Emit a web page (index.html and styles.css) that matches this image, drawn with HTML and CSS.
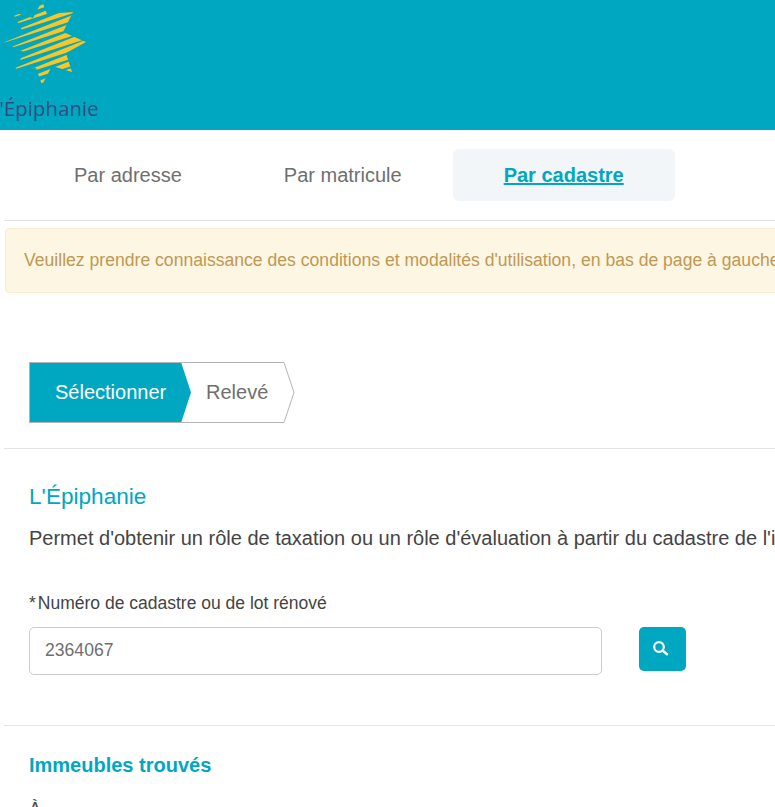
FILE: index.html
```html
<!DOCTYPE html>
<html lang="fr">
<head>
    <meta charset="UTF-8">
    <meta name="viewport" content="width=device-width, initial-scale=1.0">
    <title>L'Épiphanie - Rôle en ligne</title>
    <link rel="stylesheet" href="styles.css">
</head>
<body>
    <header class="banner">
        <svg class="logo-star" width="90" height="90" viewBox="0 0 90 90" aria-hidden="true">
            <defs>
                <clipPath id="star-shape">
                    <polygon points="42,1 47,14 73,12 63,32 86,42 66,53 72,72 52,66 42,85 36,68 15,70 24,52 3,42 22,30 12,12 33,18"/>
                </clipPath>
            </defs>
            <path clip-path="url(#star-shape)" fill="#fdc521" d="M0 14L90-21.9V-14.9ZM0 21.5L90-14.4V-7.4ZM0 29L90-6.9V.1ZM0 36.5L90 .6V7.6ZM0 44L90 8.1V15.1ZM0 51.5L90 15.6V22.6ZM0 59L90 23.1V30.1ZM0 66.5L90 30.6V37.6ZM0 74L90 38.1V45.1ZM0 81.5L90 45.6V52.6ZM0 89L90 53.1V60.1ZM0 96.5L90 60.6V67.6ZM0 104L90 68.1V75.1Z"/>
        </svg>
        <div class="logo-name">l'Épiphanie</div>
    </header>

    <div class="page">
        <nav class="tabs">
            <a class="tab">Par adresse</a>
            <a class="tab">Par matricule</a>
            <a class="tab tab-active">Par cadastre</a>
        </nav>

        <div class="alert">Veuillez prendre connaissance des conditions et modalités d'utilisation, en bas de page à gauche.</div>

        <div class="steps">
            <div class="step step-active">Sélectionner</div>
            <svg class="step-tip step-tip-active" width="10" height="61" viewBox="0 0 10 61" aria-hidden="true">
                <polygon points="0,0 10,30.5 0,61" fill="#00a7c0"/>
            </svg>
            <div class="step">Relevé</div>
            <svg class="step-tip" width="11" height="61" viewBox="0 0 11 61" aria-hidden="true">
                <polyline points="0,0.5 10,30.5 0,60.5" fill="none" stroke="#b5b5b5"/>
            </svg>
        </div>

        <section class="search">
            <h2>L'Épiphanie</h2>
            <p class="intro">Permet d'obtenir un rôle de taxation ou un rôle d'évaluation à partir du cadastre de l'immeuble.</p>
            <label class="field-label" for="cadastre"><span class="req">*</span>Numéro de cadastre ou de lot rénové</label>
            <div class="field-row">
                <input id="cadastre" type="text" value="2364067">
                <button class="search-btn" aria-label="Rechercher">
                    <svg width="16" height="15" viewBox="0 0 16 15" aria-hidden="true">
                        <circle cx="6" cy="6" r="4.8" fill="none" stroke="#fff" stroke-width="2.2"/>
                        <line x1="9.5" y1="9.5" x2="14" y2="13.2" stroke="#fff" stroke-width="2.4" stroke-linecap="round"/>
                    </svg>
                </button>
            </div>
        </section>

        <section class="results">
            <h3>Immeubles trouvés</h3>
            <p>À</p>
        </section>
    </div>
</body>
</html>
```

FILE: styles.css
```css
html, body {
    margin: 0;
    padding: 0;
    overflow: hidden;
    height: 807px;
}
body {
    font-family: "Liberation Sans", Arial, sans-serif;
    color: #444;
    background: #fff;
}
.banner {
    height: 130px;
    background-color: #00a7c0;
    overflow: hidden;
}
.logo-star {
    display: block;
}
.logo-name {
    margin: 6px 0 0 -6px;
    font-family: "Open Sans", sans-serif;
    font-size: 20.5px;
    line-height: 24px;
    color: #35497f;
    filter: blur(0.4px);
}
.page {
    width: 1100px;
    padding-left: 4px;
}
.tabs {
    display: flex;
    padding: 19px 0 19px 19px;
    border-bottom: 1px solid #e2e4e6;
}
.tab {
    padding: 0 51px;
    height: 52px;
    line-height: 52px;
    font-size: 20px;
    color: #6f6f6f;
    border-radius: 6px;
}
.tab-active {
    background-color: #f3f6f9;
    color: #00a7c0;
    font-weight: bold;
    text-decoration: underline;
}
.alert {
    margin: 7px 0 0 1px;
    height: 63px;
    line-height: 63px;
    padding-left: 18px;
    font-size: 17.6px;
    white-space: nowrap;
    color: #c09853;
    background-color: #fdf6e3;
    border: 1px solid #faedd0;
    border-radius: 4px;
}
.steps {
    display: flex;
    margin: 69px 0 0 25px;
    height: 61px;
}
.step {
    box-sizing: border-box;
    width: 103px;
    height: 61px;
    line-height: 59px;
    padding-left: 25px;
    font-size: 20px;
    color: #6f6f6f;
    border-top: 1px solid #b5b5b5;
    border-bottom: 1px solid #b5b5b5;
}
.step-active {
    width: 152px;
    padding-left: 25px;
    background-color: #00a7c0;
    color: #fff;
    border-left: 1px solid #b5b5b5;
}
.step-tip {
    display: block;
    flex: none;
}
.step-tip-active {
    margin-right: -10px;
    position: relative;
    z-index: 1;
}
.search {
    margin-top: 25px;
    border-top: 1px solid #e2e4e6;
    padding-left: 25px;
}
.search h2 {
    margin: 34px 0 0;
    font-size: 22.6px;
    line-height: 28px;
    font-weight: normal;
    color: #00a7c0;
}
.intro {
    margin: 13px 0 0;
    font-size: 20px;
    line-height: 28px;
    white-space: nowrap;
    color: #444;
}
.field-label {
    display: block;
    margin-top: 40px;
    font-size: 17.5px;
    line-height: 22px;
    color: #444;
}
.req {
    margin-right: 2px;
}
.field-row {
    display: flex;
    align-items: flex-start;
    gap: 37px;
    margin-top: 13px;
}
.field-row input {
    box-sizing: border-box;
    width: 573px;
    height: 48px;
    padding: 0 15px 2px;
    font-family: inherit;
    font-size: 17.6px;
    color: #6f6f6f;
    border: 1px solid #ccc;
    border-radius: 5px;
    outline: none;
}
.search-btn {
    display: flex;
    align-items: flex-start;
    box-sizing: border-box;
    width: 47px;
    height: 44px;
    padding: 14px 0 0 14px;
    border: none;
    border-radius: 5px;
    background-color: #00a7c0;
    cursor: pointer;
}
.results {
    margin-top: 50px;
    border-top: 1px solid #e2e4e6;
    padding-left: 25px;
}
.results h3 {
    margin: 27px 0 0;
    font-size: 20px;
    line-height: 24px;
    color: #00a7c0;
}
.results p {
    margin: 20px 0 0;
    font-size: 18px;
    line-height: 24px;
}
```
